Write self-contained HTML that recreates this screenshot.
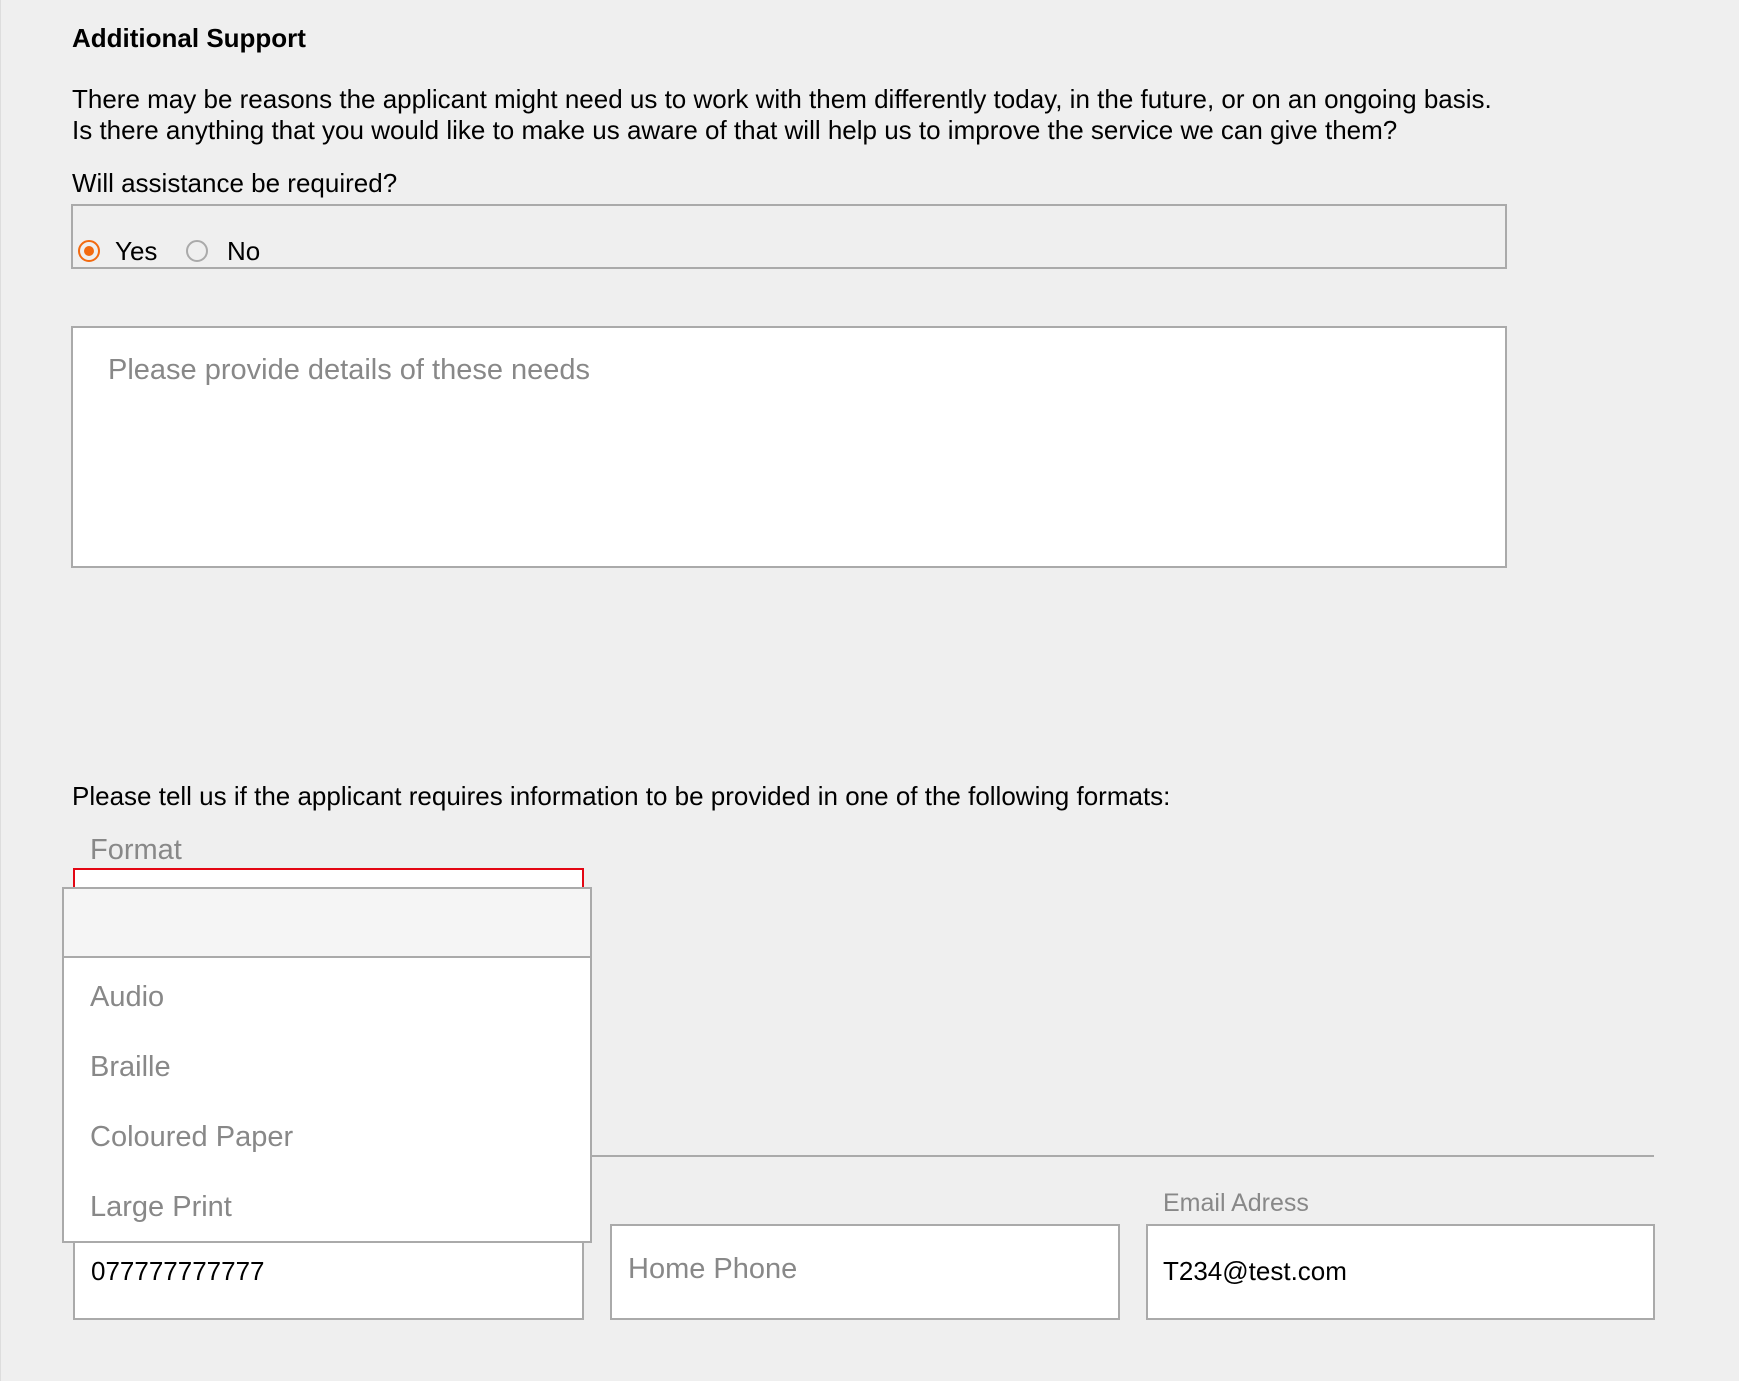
<!DOCTYPE html>
<html><head><style>
*{margin:0;padding:0;box-sizing:border-box}
body{width:1739px;height:1381px;background:#efefef;font-family:"Liberation Sans",Arial,sans-serif;color:#000;position:relative;overflow:hidden;border-left:1px solid #ddd}
.a{position:absolute;white-space:nowrap;line-height:1}
.t{font-size:26px}
.g{color:#888}
.box{position:absolute;border:2px solid #aaa;background:#fff}
</style></head><body>
<div class="a" style="left:71px;top:25px;font-size:26px;font-weight:bold">Additional Support</div>
<div class="a t" style="left:71px;top:84px;line-height:31px">There may be reasons the applicant might need us to work with them differently today, in the future, or on an ongoing basis.<br>Is there anything that you would like to make us aware of that will help us to improve the service we can give them?</div>
<div class="a t" style="left:71px;top:170px">Will assistance be required?</div>
<div class="box" style="left:70px;top:204px;width:1436px;height:65px;background:#efefef"></div>
<div style="position:absolute;left:77px;top:240px;width:22px;height:22px;border:2px solid #f26a10;border-radius:50%"></div>
<div style="position:absolute;left:83px;top:246px;width:10px;height:10px;background:#f26a10;border-radius:50%"></div>
<div class="a t" style="left:114px;top:238px">Yes</div>
<div style="position:absolute;left:185px;top:240px;width:22px;height:22px;border:2px solid #aaa;border-radius:50%"></div>
<div class="a t" style="left:226px;top:238px">No</div>
<div class="box" style="left:70px;top:326px;width:1436px;height:242px"></div>
<div class="a g" style="left:107px;top:356px;font-size:29px">Please provide details of these needs</div>
<div class="a t" style="left:71px;top:783px">Please tell us if the applicant requires information to be provided in one of the following formats:</div>
<div class="a g" style="left:89px;top:836px;font-size:29px">Format</div>
<div style="position:absolute;left:72px;top:868px;width:511px;height:40px;border:2px solid #e30613;background:#fff"></div>
<div style="position:absolute;left:72px;top:1155px;width:1581px;height:2px;background:#aaa"></div>
<div class="a g" style="left:1162px;top:1191px;font-size:25px">Email Adress</div>
<div class="box" style="left:72px;top:1224px;width:511px;height:96px"></div>
<div class="a t" style="left:90px;top:1258px">077777777777</div>
<div class="box" style="left:609px;top:1224px;width:510px;height:96px"></div>
<div class="a g" style="left:627px;top:1255px;font-size:29px">Home Phone</div>
<div class="box" style="left:1145px;top:1224px;width:509px;height:96px"></div>
<div class="a t" style="left:1162px;top:1258px">T234@test.com</div>
<div class="box" style="left:61px;top:887px;width:530px;height:356px"></div>
<div style="position:absolute;left:63px;top:889px;width:526px;height:69px;background:#f5f5f5;border-bottom:2px solid #aaa"></div>
<div class="a g" style="left:89px;top:983px;font-size:29px">Audio</div>
<div class="a g" style="left:89px;top:1053px;font-size:29px">Braille</div>
<div class="a g" style="left:89px;top:1123px;font-size:29px">Coloured Paper</div>
<div class="a g" style="left:89px;top:1193px;font-size:29px">Large Print</div>
</body></html>
